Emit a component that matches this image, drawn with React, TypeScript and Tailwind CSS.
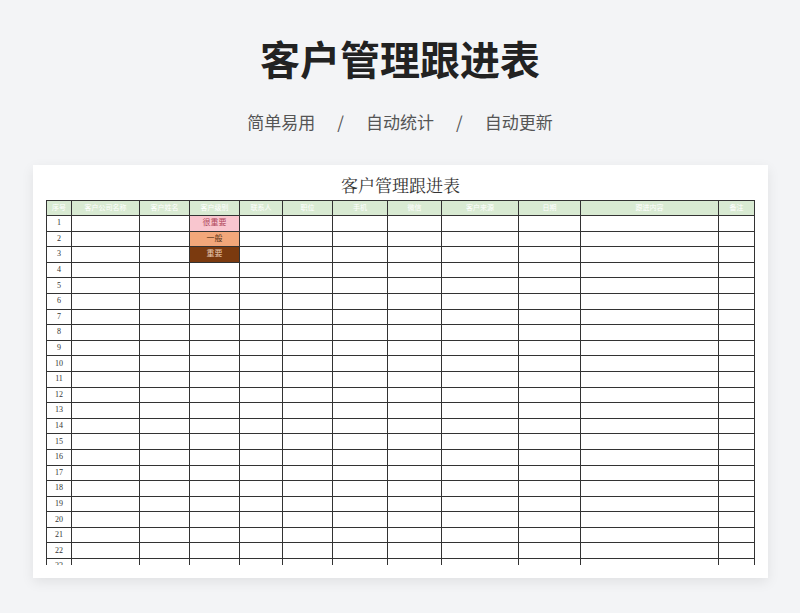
const heads: [string, number][] = [
  ["序号", 25], ["客户公司名称", 68], ["客户姓名", 50], ["客户级别", 50], ["联系人", 43], ["职位", 50],
  ["手机", 55], ["微信", 54], ["客户来源", 77], ["日期", 62], ["跟进内容", 138], ["备注", 36],
];
const lvl: Record<number, [string, string, string]> = {
  1: ["很重要", "bg-[#f9c6cf]", "text-[#b0475c]"],
  2: ["一般", "bg-[#f2a77a]", "text-[#5a3218]"],
  3: ["重要", "bg-[#7b3a0f]", "text-[#e8c9b0]"],
};
export default function App() {
  const rows = Array.from({ length: 23 }, (_, i) => i + 1);
  return (
    <div className="w-[800px] h-[613px] bg-[#f3f4f6] flex flex-col items-center overflow-hidden" style={{ fontFamily: '"Noto Sans CJK SC", sans-serif' }}>
      <h1 className="mt-[31px] text-[40px] leading-[54px] font-bold text-[#222]">客户管理跟进表</h1>
      <div className="mt-[25px] flex gap-[22px] text-[17px] text-[#555] leading-[24px]">
        <span>简单易用</span><span>/</span><span>自动统计</span><span>/</span><span>自动更新</span>
      </div>
      <div className="mt-[31px] w-[735px] h-[413px] bg-white shadow-[0_4px_12px_rgba(0,0,0,0.08)] ml-[1px] flex flex-col items-center overflow-hidden">
        <div className="mt-[8px] text-[17px] leading-[24px] text-[#333]" style={{ fontFamily: '"Noto Serif CJK SC","Noto Sans CJK SC", serif' }}>客户管理跟进表</div>
        <div className="mt-[3px] h-[365px] overflow-hidden">
          <table className="border-collapse table-fixed text-[8px] text-[#333]" style={{ fontFamily: '"Liberation Serif","Noto Sans CJK SC", serif' }}>
            <colgroup>{heads.map(([h, w]) => <col key={h} style={{ width: w }} />)}</colgroup>
            <thead>
              <tr className="h-[15px] bg-[#d8ead2]">
                {heads.map(([h]) => <th key={h} className="border border-[#333] font-normal text-white text-[7px] p-0">{h}</th>)}
              </tr>
            </thead>
            <tbody>
              {rows.map((r) => (
                <tr key={r} className="h-[15.6px]">
                  {heads.map(([h], c) => {
                    const l = c === 3 ? lvl[r] : undefined;
                    return (
                      <td key={h} className={`border border-[#333] p-0 text-center leading-[14px] ${l ? l[1] + " " + l[2] : ""}`}>
                        {c === 0 ? r : l ? l[0] : ""}
                      </td>
                    );
                  })}
                </tr>
              ))}
            </tbody>
          </table>
        </div>
      </div>
    </div>
  );
}
